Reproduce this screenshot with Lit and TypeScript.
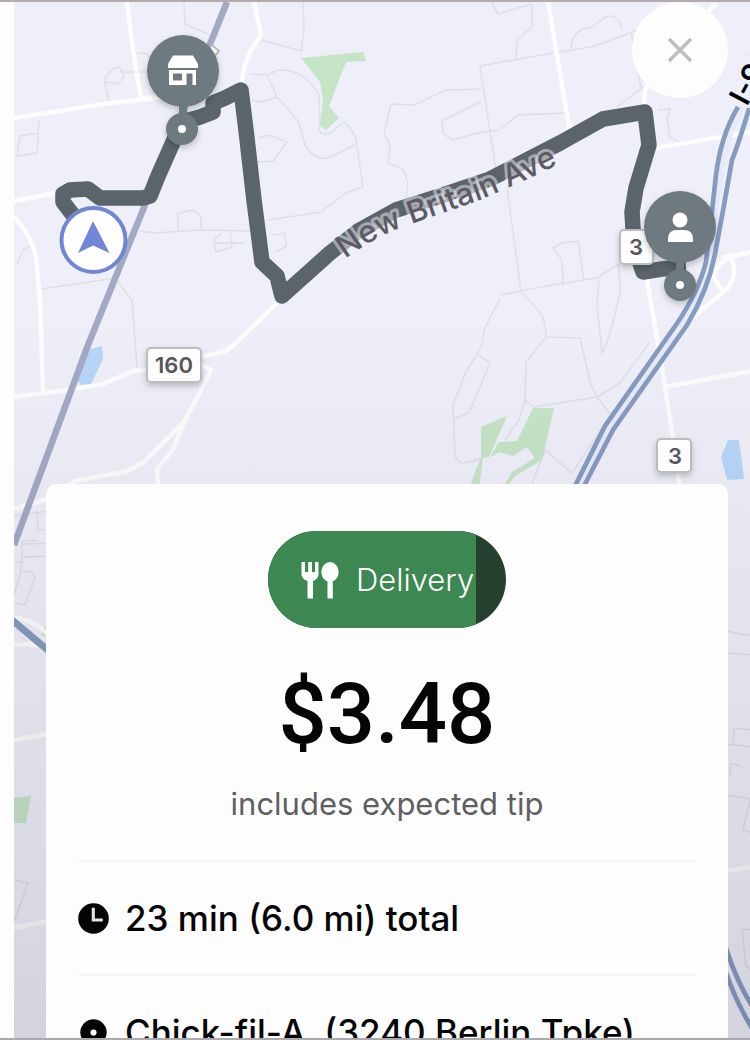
import { LitElement, html, css, svg } from "lit";
import { customElement, property } from "lit/decorators.js";

const streets = [
  "M14 118 L110 103 L157 98", "M127 2 L133 50 L141 98 L175 96", "M14 201 L60 192",
  "M14 217 Q31 235 36 256 L40 300 L43 392", "M254 2 L261 35 Q242 60 242 86",
  "M14 397 L75 389 L103 384 L133 371 L150 370 L205 356 L226 351 L238 341 L280 300",
  "M201 365 L211 370 L197 398 L184 422 L145 461 L128 471 L75 481 L44 500 L14 509",
  "M184 422 L173 450 L157 469 L158 486", "M548 2 L570 132", "M655 148 L752 132",
  "M644 112 L645 90 L680 40 L716 4", "M647 280 L660 356 L675 450 L690 560",
  "M665 387 L752 371", "M722 258 L752 252", "M690 320 L728 288 Q738 274 731 257 Q718 262 713 275 Q719 288 724 290",
  "M14 617 Q38 622 50 637", "M14 645 L31 644 L48 650", "M14 740 L48 734", "M14 928 L48 921", "M726 871 L752 867",
];

const lanes = [
  "M184 2 L185 24 L210 35", "M138 53 L147 54 L153 60", "M157 72 L121 72 Q122 66 115 68 L106 76 L105 84 L109 102 M106 82 L118 84 L124 76 L122 70",
  "M39 120 L37 153 L17 156 L20 136 L38 133", "M178 231 L178 213 L193 210 L201 216 L201 229 M140 231 L155 233 L200 230 L250 231 M214 240 L216 252 L232 247 L230 233 M214 240 L222 233 M215 243 L245 243",
  "M17 264 L24 249 L31 246", "M42 289 L115 278 L132 300 L137 368", "M303 2 L304 30 L301 51 L261 40",
  "M250 74 L267 75 L278 70 Q305 69 319 95 L320 125 Q316 135 329 134 L344 122 Q354 130 356 140 L363 187 L346 193 L321 212 L268 220 M267 75 L277 97 L299 122 L305 145 Q316 163 331 157 L357 144 M252 100 L260 102 L277 97",
  "M257 162 L273 161 L287 142 L270 135 L258 138", "M273 235 L285 233 L286 246 L276 252",
  "M391 104 L414 105 L446 90 L481 89 M391 104 L384 134 L390 145 L388 163 L403 169 L408 182 L405 204 M482 101 L442 121 L443 133 L452 140 L482 132 L500 130 M496 170 L480 66 L530 57 L595 46 L635 31 M492 2 L498 14 L532 4 M532 4 L532 27 L517 40 L516 60 M571 48 Q573 28 590 28 L607 16 Q620 15 622 30 M631 31 L641 88",
  "M500 129 L518 115 L565 113 M617 107 L642 88 L665 86 M658 110 L670 109 L667 120 L670 137 L682 144",
  "M507 187 L521 292 L538 310 Q546 319 546 337 L580 338 L590 382 L597 397 L611 415 L572 473 L545 450 L532 484 M500 295 L540 287 L597 278 L619 264 L620 292 Q610 340 602 353 L597 304 L599 280 M563 285 L562 260 L553 248 L561 243 L578 241 L584 281",
  "M500 298 L485 328 L482 344 L477 354 L466 372 L453 405 L455 455 Q457 465 470 462 L482 458 M477 354 L490 363 L469 413 L455 418 M546 337 L526 362 L525 400 L534 407 L597 397 L620 383 L650 342 M525 400 L519 420 L505 440",
  "M14 516 L55 510 M37 511 L38 530 L60 528 M14 562 L22 562 L22 541 L37 541 M22 558 L20 575 L14 595 M22 544 L60 543 M21 557 L60 556 M21 571 L32 572 L35 578 L25 605 L15 603 M14 880 L28 883 L15 920",
  "M726 631 L752 636 M726 653 L752 655 M734 728 L752 730 M734 728 L733 746 M726 744 L752 747 M726 795 L752 799 M750 800 L743 830 L752 833 M730 777 L731 763 L740 766 M752 929 L742 930 L746 966 L752 970",
];

const parks = [
  "M301 58 L363 52 L366 61 L346 62 L329 106 L339 118 L326 130 L320 126 L323 100 L320 82 Z",
  "M481 427 L507 416 L500 432 L489 457 L483 458 L479 488 L469 488 L481 457 Z",
  "M533 408 L554 408 L542 460 L515 476 L506 488 L505 484 L512 472 L535 458 L527 447 L513 456 L500 452 L490 457 L499 442 L517 441 Z",
  "M41 634 L50 618 L50 640 Z", "M14 798 L31 796 L26 823 L14 823 Z",
];

const route =
  "M73 215 L63 202 L63 194 L70 190 L88 189 L100 198 L143 198 L150 196 L158 176 L182 122 L200 117 L213 112 L213 103 L225 98 L241 90 L246 130 L254 200 L262 262 L277 276 L282 296 L330 253 L358 231 L396 210 L440 196 L490 179 L560 143 L603 119 L645 112 L649 145 L636 188 L632 212 L634 245 L643 272 L662 269 L686 267";

const mapView = svg`
  <defs>
    <linearGradient id="shade" x1="0" y1="0" x2="0" y2="1">
      <stop offset="0.3" stop-color="#1a1a2c" stop-opacity="0"></stop>
      <stop offset="1" stop-color="#1a1a2c" stop-opacity="0.13"></stop>
    </linearGradient>
    <filter id="soft" x="-30%" y="-30%" width="160%" height="160%">
      <feDropShadow dx="0" dy="3" stdDeviation="3" flood-color="#000" flood-opacity="0.22"></feDropShadow>
    </filter>
    <path id="avenue" d="M345 259 Q372 239 400 228 L440 214 L480 200 L530 178 L620 135"></path>
  </defs>
  ${lanes.map((d) => svg`<path class="lane" d=${d}></path>`)}
  ${parks.map((d) => svg`<path class="park" d=${d}></path>`)}
  <path class="water" d="M90 349 L102 346 L103 359 L91 384 L81 385 L77 379 Z M728 440 L739 440 L744 479 L727 480 L721 457 Z"></path>
  ${streets.map((d) => svg`<path class="street" d=${d}></path>`)}
  <path class="rail" d="M227 2 L147 200 L88 345 L14 545"></path>
  <path class="highway-bed" d="M742 106 Q728 130 722 160 L714 210 L709 262 Q702 292 683 324 L610 428 L580 486"></path>
  <path class="highway" d="M738 107 Q721 135 716 175 L711 220 L706 262 Q699 290 678 322 L605 426 L575 486"></path>
  <path class="highway" d="M754 92 Q740 140 732 160 L724 205 L715 254 Q708 290 687 325 L613 430 L584 486"></path>
  <path class="highway wide" d="M12 620 L50 652"></path>
  <path class="highway" d="M726 948 Q736 980 752 1006 M725 970 Q736 1002 752 1028"></path>
  <path class="tile" d="M212 45 L219 51 L212 59 L205 53 Z"></path>
  <path class="route" d=${route}></path>
  <text class="road-name"><textPath href="#avenue">New Britain Ave</textPath></text>
  <text class="interstate" transform="translate(747 107) rotate(-62)">I-91</text>
  <rect width="736" height="1040" x="14" fill="url(#shade)"></rect>

  <g class="shield" filter="url(#soft)">
    <rect x="147" y="348" width="54" height="34" rx="4"></rect>
    <rect x="620" y="230" width="33" height="34" rx="4"></rect>
    <rect x="657" y="439" width="34" height="33" rx="4"></rect>
  </g>
  <text class="shield-text" x="174" y="373">160</text>
  <text class="shield-text" x="636" y="255">3</text>
  <text class="shield-text" x="675" y="464">3</text>

  <g filter="url(#soft)">
    <g class="pin"><rect x="179" y="100" width="8" height="20"></rect><circle cx="183" cy="71" r="36"></circle><circle cx="182" cy="129" r="16"></circle></g>
  </g>
  <circle class="glyph" cx="182" cy="129" r="4"></circle>
  <path class="glyph" fill-rule="evenodd" d="M173 55.5 H193 L198 64 V68 H168 V64 Z M169 70 H196 V85 H192.500 V73.500 H186.500 V85 H169 Z M173 73.500 V80.500 H182 V73.500 Z"></path>

  <g filter="url(#soft)">
    <g class="pin"><rect x="676" y="256" width="8" height="20"></rect><circle cx="680" cy="227" r="36"></circle><circle cx="680" cy="285" r="16"></circle></g>
  </g>
  <circle class="glyph" cx="680" cy="285" r="4"></circle>
  <circle class="glyph" cx="680" cy="220" r="7.500"></circle>
  <path class="glyph" d="M668 242 V239 Q668 230 677 230 H684 Q693 230 693 239 V242 Z"></path>

  <circle class="locator" cx="93.500" cy="240" r="32"></circle>
  <path class="arrow" d="M93 221 L109.500 253 L93 245.500 L78 253 Z"></path>
`;

const clockIcon = svg`<svg class="icon" viewBox="0 0 30 30" aria-hidden="true">
  <circle cx="15" cy="15" r="14.800"></circle><path class="hand" d="M14.800 4.500 V16.500 H24"></path></svg>`;
const stopIcon = svg`<svg class="icon" viewBox="0 0 30 30" aria-hidden="true">
  <circle cx="15" cy="15" r="12.800"></circle><circle class="hole" cx="15" cy="15" r="3"></circle></svg>`;

@customElement("app-root")
export class AppRoot extends LitElement {
  @property({ type: Number }) remaining = 87.5;

  static styles = css`
    :host { display: block; font-family: Inter, "Noto Sans", sans-serif; color: #050505; }
    .screen {
      position: relative; box-sizing: border-box; height: 100vh; overflow: hidden;
      display: flex; flex-direction: column; padding: 482px 22px 0 46px; background: #fdfdfd;
      border-top: 2px solid #b5aaac;
    }
    .screen::after {
      content: ""; position: absolute; left: 0; right: 0; bottom: 0; height: 2px; background: #aaa9ad;
    }
    .map { position: absolute; inset: 0 0 0 14px; background: #efeff9; overflow: hidden; }
    .map svg { display: block; width: 100%; height: 100%; }
    .lane { fill: none; stroke: #dedfe7; stroke-width: 1.5; }
    .street { fill: none; stroke: #fdfdfd; stroke-width: 4.5; stroke-linejoin: round; }
    .park { fill: #c6e4c6; }
    .water { fill: #b7d6f7; }
    .rail { fill: none; stroke: #a3a9c4; stroke-width: 6.5; stroke-linejoin: round; }
    .highway-bed { fill: none; stroke: #e6ebf7; stroke-width: 8; }
    .highway { fill: none; stroke: #869bc0; stroke-width: 4.7; }
    .wide { stroke-width: 7; }
    .tile { fill: #fff; stroke: #bbb; stroke-width: 2; }
    .route { fill: none; stroke: #5a646a; stroke-width: 15.5; stroke-linejoin: round; }
    .road-name {
      font-size: 31px; font-weight: 500; fill: #5c5a62; stroke: #efeff9;
      stroke-opacity: 0.5; stroke-width: 6px; stroke-linejoin: round; paint-order: stroke;
    }
    .interstate {
      font-size: 30px; font-weight: 600; fill: #050505; stroke: #efeff9; stroke-width: 5px; paint-order: stroke;
    }
    .shield rect { fill: #fdfdfd; stroke: #bcbcc0; stroke-width: 2; }
    .shield-text { font-size: 22px; font-weight: 600; fill: #55555a; text-anchor: middle; }
    .pin { fill: #6e7a80; }
    .glyph { fill: #fff; }
    .locator { fill: #fff; stroke: #7186d2; stroke-width: 4; }
    .arrow { fill: #7186d8; }
    .close {
      position: absolute; top: 0; right: 22px; width: 96px; height: 96px; padding: 0;
      border: 0; border-radius: 50%; background: #fdfdfd; display: grid; place-items: center;
    }
    .close svg { width: 24px; height: 24px; stroke: #bdbdbf; stroke-width: 3.5; }
    .card {
      position: relative; flex: 1 0 auto; display: flex; flex-direction: column; align-items: center;
      padding: 47px 32px 0; border-radius: 10px 10px 0 0; background: #fdfdfe;
    }
    .pill {
      position: relative; box-sizing: border-box; width: 238px; height: 97px; border-radius: 49px;
      overflow: hidden; background: #25402e; color: #fff; display: flex; align-items: center;
      gap: 16px; padding-left: 32px; font-size: 31px; font-weight: 300; line-height: 40px;
    }
    .elapsed { position: absolute; inset: 0 auto 0 0; background: #3d8752; }
    .pill svg, .pill span { position: relative; }
    .pill svg { width: 40px; height: 40px; flex: none; fill: #fff; }
    .price { margin: 34px 0 0; font-family: Roboto, Inter, sans-serif; font-size: 85px; font-weight: 500; line-height: 104px; }
    .note { margin: 18px 0 0; font-size: 31px; font-weight: 400; line-height: 40px; color: #5f5f62; }
    .details { align-self: stretch; list-style: none; margin: 36px 0 0; padding: 0; }
    .details li {
      display: flex; align-items: center; gap: 16px; height: 112px; border-top: 2px solid #f5f5f7;
      font-size: 35px; font-weight: 500; line-height: 44px; white-space: pre;
    }
    .icon { width: 31px; height: 31px; flex: none; fill: #050505; }
    .hand { fill: none; stroke: #e4e4e4; stroke-width: 3; }
    .hole { fill: #fdfdfe; }
  `;

  render() {
    return html`
      <main class="screen">
        <div class="map">
          <svg viewBox="14 2 736 1038" preserveAspectRatio="xMidYMin slice" role="img" aria-label="Route map">${mapView}</svg>
        </div>
        <button class="close" aria-label="Close">
          <svg viewBox="0 0 24 24" aria-hidden="true"><path d="M1 1 L23 23 M23 1 L1 23"></path></svg>
        </button>
        <section class="card">
          <div class="pill">
            <div class="elapsed" style="width:${this.remaining}%"></div>
            <svg viewBox="0 0 40 40" aria-hidden="true">
              <path d="M1.500 2 H5 V12 H8.200 V2 H12 V12 H15 V2 H18.500 V14 Q18.500 19 13 21 V38.500 H7.500 V21 Q1.500 19 1.500 14 Z"></path>
              <ellipse cx="30" cy="12" rx="8.700" ry="10"></ellipse><rect x="27.500" y="18" width="5.300" height="20.500"></rect>
            </svg>
            <span>Delivery</span>
          </div>
          <h1 class="price">$3.48</h1>
          <p class="note">includes expected tip</p>
          <ul class="details">
            <li>${clockIcon}<span>23 min (6.0 mi) total</span></li>
            <li>${stopIcon}<span>Chick-fil-A  (3240 Berlin Tpke)</span></li>
          </ul>
        </section>
      </main>
    `;
  }
}
